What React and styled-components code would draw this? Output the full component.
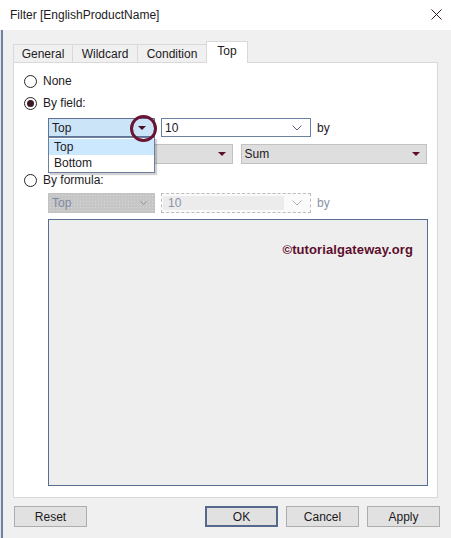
import React from 'react';
import styled, { createGlobalStyle } from 'styled-components';

const Global = createGlobalStyle`
  html, body {
    margin: 0;
    padding: 0;
    background: #f0f0f0;
    overflow: hidden;
  }
  body {
    font-family: "Liberation Sans", Arial, sans-serif;
    font-size: 12px;
    color: #221a1d;
  }
`;

const Window = styled.div`
  width: 451px;
  height: 538px;
  display: flex;
  flex-direction: column;
  background: #f0f0f0;
`;

const TitleBar = styled.div`
  height: 30px;
  flex: none;
  background: #fff;
  display: flex;
  align-items: center;
  justify-content: space-between;
  padding: 0 9px 1px 10px;
  box-sizing: border-box;
`;

const Title = styled.span`
  font-size: 12px;
  color: #221a1d;
`;

const Body = styled.div`
  flex: 1;
  display: flex;
  flex-direction: column;
  padding: 11px 11px 0 13px;
  box-shadow: inset 1px 0 0 #e4e4e4, inset 3px 0 0 #6f82a4;
`;

const TabStrip = styled.div`
  display: flex;
  align-items: flex-end;
  height: 22px;
  margin-bottom: -1px;
  position: relative;
  z-index: 1;
`;

const Tab = styled.div`
  height: ${p => (p.$active ? '22px' : '19px')};
  width: ${p => p.$w}px;
  box-sizing: border-box;
  margin-left: ${p => (p.$first ? '0' : '-1px')};
  border: 1px solid #d9d9d9;
  border-bottom: ${p => (p.$active ? 'none' : '1px solid #d9d9d9')};
  background: ${p => (p.$active ? '#fff' : '#f0f0f0')};
  display: flex;
  align-items: center;
  justify-content: center;
  padding-bottom: ${p => (p.$active ? '3px' : '0')};
  color: #221a1d;
`;

const Panel = styled.div`
  margin-right: 2px;
  height: 436px;
  box-sizing: border-box;
  background: #fff;
  border: 1px solid #d9d9d9;
  padding: 10px 10px 0 10px;
  display: flex;
  flex-direction: column;
`;

const RadioRow = styled.label`
  display: flex;
  align-items: center;
  height: 16px;
  margin-top: ${p => p.$mt || 0}px;
  gap: 6px;
`;

const RadioCircle = styled.span`
  width: 13px;
  height: 13px;
  box-sizing: border-box;
  border: 1px solid #2a2226;
  border-radius: 50%;
  display: flex;
  align-items: center;
  justify-content: center;
  &::after {
    content: '';
    width: 7px;
    height: 7px;
    border-radius: 50%;
    background: ${p => (p.$checked ? '#3a1a26' : 'transparent')};
  }
`;

const FieldRow = styled.div`
  display: flex;
  align-items: center;
  margin-left: 24px;
  margin-top: ${p => p.$mt}px;
  height: ${p => p.$h}px;
`;

const ComboWrap = styled.div`
  position: relative;
  height: 100%;
`;

const Combo = styled.div`
  width: ${p => p.$w}px;
  height: 100%;
  box-sizing: border-box;
  display: flex;
  align-items: center;
  justify-content: space-between;
  padding: 0 ${p => p.$pr || 8}px 0 3px;
  border: 1px solid ${p => p.$border || '#6d7f9e'};
  background: ${p => p.$bg || '#fff'};
  color: ${p => p.$color || '#221a1d'};
  margin-right: ${p => p.$mr || 0}px;
`;

const DisabledCombo = styled(Combo)`
  background-color: #dedede;
  background-image: radial-gradient(#eaeaea 0.6px, transparent 0.7px);
  background-size: 4px 4px;
  border-color: #c2c2c2;
`;

const HatchCombo = styled(Combo)`
  background-color: #c6c6c6;
  background-image: radial-gradient(#d6d6d6 0.6px, transparent 0.7px);
  background-size: 3px 3px;
  border-color: #c3c3c3;
  color: #7d8aa3;
`;

const DashedCombo = styled(Combo)`
  border: 1px dashed #bcbcbc;
  background: #fafafa;
  padding: 2px 8px 2px 1px;
  color: #8993a6;
`;

const DashedText = styled.span`
  flex: 1;
  height: 100%;
  display: flex;
  align-items: center;
  padding-left: 5px;
  background: #ececec;
  margin-right: 8px;
`;

const Triangle = styled.span`
  width: 0;
  height: 0;
  border-left: 4px solid transparent;
  border-right: 4px solid transparent;
  border-top: 4px solid ${p => p.$color || '#5b0f2c'};
`;

const Chevron = ({ color = '#53627e', w = 10 }) => (
  <svg width={w} height="6" viewBox="0 0 10 6">
    <path d="M0.5 0.5 L5 5 L9.5 0.5" fill="none" stroke={color} strokeWidth="1" />
  </svg>
);

const By = styled.span`
  margin-left: 6px;
  color: ${p => (p.$disabled ? '#8993a6' : '#221a1d')};
`;

const Highlight = styled.div`
  position: absolute;
  left: 82px;
  top: -3px;
  width: 27px;
  height: 27px;
  box-sizing: border-box;
  border: 3px solid #6a1533;
  border-radius: 50%;
  z-index: 3;
`;

const DropList = styled.div`
  position: absolute;
  left: 0;
  top: 19px;
  width: 107px;
  box-sizing: border-box;
  border: 1px solid #6d7f9e;
  background: #fff;
  padding: 1px 0 1px;
  box-shadow: 2px 2px 1px rgba(0, 0, 0, 0.18);
  z-index: 2;
`;

const DropItem = styled.div`
  height: 16px;
  display: flex;
  align-items: center;
  padding-left: 5px;
  background: ${p => (p.$selected ? '#cce8ff' : '#fff')};
`;

const Formula = styled.div`
  margin: 6px 0 0 24px;
  width: 380px;
  height: 267px;
  box-sizing: border-box;
  border: 1px solid #5a6e92;
  background: #eeeeee;
  display: flex;
  justify-content: flex-end;
  padding: 22px 14px 0 0;
`;

const Watermark = styled.span`
  font-family: "Liberation Sans", Arial, sans-serif;
  font-weight: bold;
  font-size: 13px;
  color: #5c0d2c;
  letter-spacing: 0.1px;
`;

const ButtonRow = styled.div`
  display: flex;
  margin-top: 8px;
  padding-left: 1px;
  gap: 8px;
`;

const Button = styled.div`
  width: 73px;
  height: 21px;
  box-sizing: border-box;
  display: flex;
  align-items: center;
  justify-content: center;
  background: #e1e1e1;
  border: ${p => (p.$default ? '2px solid #56698c' : '1px solid #adadad')};
  margin-right: ${p => (p.$push ? 'auto' : '0')};
  color: #221a1d;
`;

const CloseIcon = () => (
  <svg width="11" height="11" viewBox="0 0 11 11">
    <path d="M0.5 0.5 L10.5 10.5 M10.5 0.5 L0.5 10.5" stroke="#3a1a26" strokeWidth="1" />
  </svg>
);

export default function App() {
  return (
    <Window>
      <Global />
      <TitleBar>
        <Title>Filter [EnglishProductName]</Title>
        <CloseIcon />
      </TitleBar>
      <Body>
        <TabStrip>
          <Tab $first $w={60}>General</Tab>
          <Tab $w={66}>Wildcard</Tab>
          <Tab $w={70}>Condition</Tab>
          <Tab $active $w={42}>Top</Tab>
        </TabStrip>
        <Panel>
          <RadioRow $mt={0}>
            <RadioCircle />
            None
          </RadioRow>
          <RadioRow $mt={6}>
            <RadioCircle $checked />
            By field:
          </RadioRow>
          <FieldRow $mt={7} $h={19}>
            <ComboWrap>
              <Combo $w={107} $bg="#cce4f7" $border="#5f7396">
                Top
                <Triangle $color="#4a0d24" />
              </Combo>
              <Highlight />
              <DropList>
                <DropItem $selected>Top</DropItem>
                <DropItem>Bottom</DropItem>
              </DropList>
            </ComboWrap>
            <Combo $w={150} style={{ marginLeft: 6 }}>
              10
              <Chevron />
            </Combo>
            <By>by</By>
          </FieldRow>
          <FieldRow $mt={7} $h={20}>
            <DisabledCombo $w={185} $mr={8} $pr={6}>
              <span />
              <Triangle />
            </DisabledCombo>
            <DisabledCombo $w={187} $pr={6}>
              Sum
              <Triangle />
            </DisabledCombo>
          </FieldRow>
          <RadioRow $mt={8}>
            <RadioCircle />
            By formula:
          </RadioRow>
          <FieldRow $mt={5} $h={20}>
            <HatchCombo $w={107} $pr={7}>
              Top
              <Chevron color="#6f7a8e" w={7} />
            </HatchCombo>
            <DashedCombo $w={150} style={{ marginLeft: 6 }}>
              <DashedText>10</DashedText>
              <Chevron color="#b0b0b0" />
            </DashedCombo>
            <By $disabled>by</By>
          </FieldRow>
          <Formula>
            <Watermark>©tutorialgateway.org</Watermark>
          </Formula>
        </Panel>
        <ButtonRow>
          <Button $push>Reset</Button>
          <Button $default>OK</Button>
          <Button>Cancel</Button>
          <Button>Apply</Button>
        </ButtonRow>
      </Body>
    </Window>
  );
}
